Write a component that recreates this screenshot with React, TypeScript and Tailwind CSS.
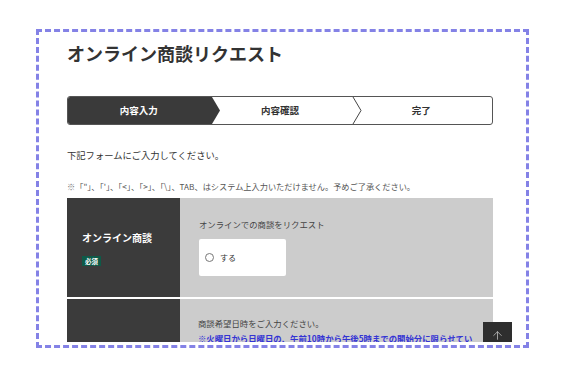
import { ArrowUp } from "lucide-react";

export default function App() {
  return (
    <div className="min-h-screen w-full bg-white pt-[29px] pl-[36px] font-['Noto_Sans_CJK_JP','Noto_Sans',sans-serif] text-[#333]">
      {/* 点線の枠 */}
      <div className="w-[493px] h-[319px] border-[3px] border-dashed border-[#8482e6] pb-[3px]">
        <div className="relative h-full overflow-hidden pl-[28px]">
          <h1 className="mt-[8px] text-[18px] font-bold leading-[27px] text-[#333]">
            オンライン商談リクエスト
          </h1>

          {/* ステップ */}
          <div className="mt-[29px] flex h-[29px] w-[426px] rounded-[3px] border border-[#555]">
            <div className="relative flex flex-1 items-center justify-center rounded-l-[2px] bg-[#3a3a3a]">
              <span className="text-[9.5px] font-bold text-white">内容入力</span>
              <svg className="absolute left-full top-0 z-10 h-full w-[11px]" viewBox="0 0 11 27" preserveAspectRatio="none">
                <polygon points="0,0 3,0 11,13.5 3,27 0,27" fill="#3a3a3a" />
              </svg>
            </div>
            <div className="relative flex flex-1 items-center justify-center">
              <span className="text-[9.5px] font-bold text-[#333]">内容確認</span>
              <svg className="absolute left-full top-0 z-10 h-full w-[11px]" viewBox="0 0 11 27" preserveAspectRatio="none">
                <polyline points="2,0 10,13.5 2,27" fill="none" stroke="#444" strokeWidth="1" />
              </svg>
            </div>
            <div className="flex flex-1 items-center justify-center">
              <span className="text-[9.5px] font-bold text-[#333]">完了</span>
            </div>
          </div>

          <p className="mt-[23px] text-[9.3px] leading-[14px] text-[#333]">下記フォームにご入力してください。</p>
          <p className="mt-[18px] whitespace-nowrap text-[8.2px] leading-[12px] text-[#555]">
            <span className="text-[#777]">※</span>「"」、「'」、「&lt;」、「&gt;」、「\」、TAB、はシステム上入力いただけません。予めご了承ください。
          </p>

          {/* フォーム */}
          <div className="mt-[6px] w-[426px]">
            <div className="grid h-[99px] grid-cols-[113px_1fr]">
              <div className="bg-[#3b3b3b] pl-[15px] pt-[33px]">
                <div className="text-[10px] font-bold leading-[14px] text-white">オンライン商談</div>
                <span className="mt-[10px] inline-block h-[10px] bg-[#0e5a48] px-[3px] text-[6.5px] font-bold leading-[10px] text-white">
                  必須
                </span>
              </div>
              <div className="bg-[#cccccc] pl-[19px] pt-[20px]">
                <div className="text-[8.4px] leading-[12px] text-[#444]">オンラインでの商談をリクエスト</div>
                <div className="mt-[9px] flex h-[37px] w-[87px] items-center gap-[6px] rounded-[2px] bg-white pl-[6px]">
                  <span className="h-[9px] w-[9px] rounded-full border-[1.5px] border-[#777]" />
                  <span className="text-[8px] text-[#333]">する</span>
                </div>
              </div>
            </div>
            <div className="h-[2px] bg-white" />
            <div className="grid h-[60px] grid-cols-[113px_1fr] overflow-hidden">
              <div className="bg-[#3b3b3b]" />
              <div className="bg-[#cccccc] pl-[18px] pr-[18px] pt-[17px]">
                <div className="text-[8.4px] leading-[14px] text-[#444]">商談希望日時をご入力ください。</div>
                <div className="text-[8.4px] font-bold leading-[16px] text-[#3434d4]">
                  ※火曜日から日曜日の、午前10時から午後5時までの開始分に限らせていただきます。
                </div>
              </div>
            </div>
          </div>

          {/* トップへ戻る */}
          <div className="absolute right-[14px] top-[290px] flex h-[26px] w-[29px] items-center justify-center bg-[#2e2e2e]">
            <ArrowUp className="h-[13px] w-[13px] text-[#bbbbbb]" strokeWidth={1.5} />
          </div>
        </div>
      </div>
    </div>
  );
}
